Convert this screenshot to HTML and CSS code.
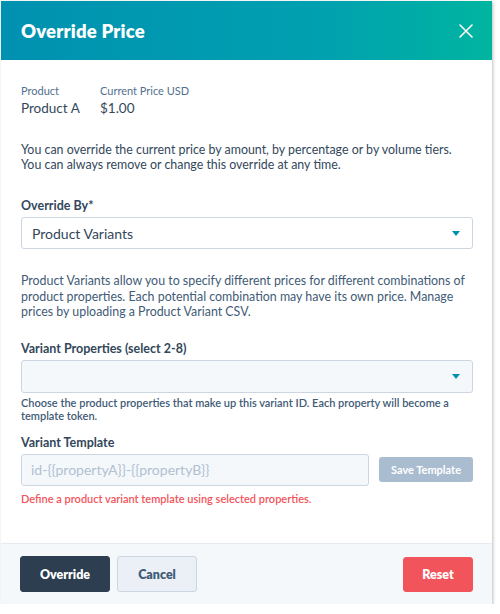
FILE: index.html
```html
<!DOCTYPE html>
<html>
<head>
<meta charset="utf-8">
<link rel="stylesheet" href="styles.css">
</head>
<body>
<div class="modal">
  <header class="modal-header">
    <h1 class="modal-title">Override Price</h1>
    <button class="close-btn" aria-label="Close">
      <svg width="14" height="14" viewBox="0 0 14 14"><path d="M1 1L13 13M13 1L1 13" stroke="#fff" stroke-width="1.6" stroke-linecap="round"/></svg>
    </button>
  </header>
  <main class="modal-body">
    <div class="info-row">
      <div class="info-col">
        <div class="info-label">Product</div>
        <div class="info-value">Product A</div>
      </div>
      <div class="info-col">
        <div class="info-label">Current Price USD</div>
        <div class="info-value">$1.00</div>
      </div>
    </div>
    <p class="intro">You can override the current price by amount, by percentage or by volume tiers. You can always remove or change this override at any time.</p>

    <div class="field field-override">
      <label class="field-label">Override By*</label>
      <div class="select select-filled">
        <span class="select-value">Product Variants</span>
        <span class="caret"></span>
      </div>
    </div>

    <p class="desc">Product Variants allow you to specify different prices for different combinations of product properties. Each potential combination may have its own price. Manage prices by uploading a Product Variant CSV.</p>

    <div class="field field-props">
      <label class="field-label">Variant Properties (select 2-8)</label>
      <div class="select select-empty">
        <span class="select-value"></span>
        <span class="caret"></span>
      </div>
      <p class="help">Choose the product properties that make up this variant ID. Each property will become a template token.</p>
    </div>

    <div class="field field-template">
      <label class="field-label">Variant Template</label>
      <div class="template-row">
        <div class="text-input">id-{{propertyA}}-{{propertyB}}</div>
        <button class="btn-save">Save Template</button>
      </div>
      <p class="error">Define a product variant template using selected properties.</p>
    </div>
  </main>
  <footer class="modal-footer">
    <button class="btn btn-primary">Override</button>
    <button class="btn btn-secondary">Cancel</button>
    <span class="spacer"></span>
    <button class="btn btn-danger">Reset</button>
  </footer>
</div>
</body>
</html>
```

FILE: styles.css
```css
* { box-sizing: border-box; }
html, body { margin: 0; padding: 0; background: #fff; }
body {
  font-family: "Lato", "Liberation Sans", sans-serif;
  color: #33475b;
}
.modal {
  margin: 1px 0 0 1px;
  width: 491px;
  height: 603px;
  display: flex;
  flex-direction: column;
  background: #fff;
  box-shadow: 1px 1px 3px rgba(0,0,0,0.25);
}
.modal-header {
  height: 59px;
  flex: none;
  display: flex;
  align-items: center;
  justify-content: space-between;
  padding: 0 19px 0 20px;
  background: linear-gradient(90deg, #0091b0 0%, #00a0b0 65%, #00b5a0 100%);
}
.modal-title {
  margin: 0;
  font-size: 18.5px;
  font-weight: 800;
  color: #fff;
  letter-spacing: 0.2px;
}
.close-btn {
  border: 0; background: none; padding: 0; margin: 0;
  width: 14px; height: 14px;
  display: flex;
}
.modal-body {
  flex: 1;
  padding: 24px 19px 0 20px;
}
.info-row { display: flex; }
.info-col:first-child { width: 79px; }
.info-label {
  font-size: 11px;
  color: #516f90;
  line-height: 14px;
}
.info-value {
  font-size: 13.5px;
  color: #33475b;
  line-height: 17px;
  margin-top: 2px;
}
.intro {
  margin: 25px 0 0;
  font-size: 12.4px;
  line-height: 15px;
  color: #33475b;
}
.field-label {
  display: block;
  font-size: 12.5px;
  font-weight: 700;
  color: #33475b;
  line-height: 16px;
}
.field-override { margin-top: 26px; }
.select {
  margin-top: 3px;
  height: 32px;
  border: 1px solid #cbd6e2;
  border-radius: 3px;
  background: #f5f8fa;
  display: flex;
  align-items: center;
  justify-content: space-between;
  padding: 0 12px 0 10px;
}
.select-filled { background: #fff; }
.select-value {
  font-size: 14px;
  color: #33475b;
}
.caret {
  width: 0; height: 0;
  border-left: 4.5px solid transparent;
  border-right: 4.5px solid transparent;
  border-top: 5px solid #0091ae;
}
.desc {
  margin: 24px 0 0;
  font-size: 12.4px;
  line-height: 15.5px;
  color: #425b76;
}
.field-props { margin-top: 21px; }
.select-empty { height: 33px; }
.help {
  margin: 3px 0 0;
  font-size: 11px;
  line-height: 13.5px;
  font-weight: 600;
  color: #425b76;
}
.field-template { margin-top: 12px; }
.template-row {
  margin-top: 3px;
  display: flex;
  align-items: center;
  gap: 10px;
}
.text-input {
  width: 348px;
  height: 32px;
  border: 1px solid #cbd6e2;
  border-radius: 3px;
  background: #f5f8fa;
  font-size: 14px;
  color: #b0c1d4;
  display: flex;
  align-items: center;
  padding-left: 9px;
}
.btn-save {
  flex: 1;
  height: 25px;
  border: 0;
  border-radius: 3px;
  background: #a9bcd0;
  color: #fff;
  font-family: inherit;
  font-size: 11px;
  font-weight: 700;
  padding: 0;
}
.error {
  margin: 6px 0 0;
  font-size: 11px;
  font-weight: 600;
  color: #f2545b;
  line-height: 14px;
}
.modal-footer {
  height: 61px;
  flex: none;
  border-top: 1px solid #e5ebf1;
  background: #f5f8fa;
  display: flex;
  align-items: center;
  padding: 0 19px 0 19px;
  gap: 7px;
}
.spacer { flex: 1; }
.btn {
  height: 36px;
  border-radius: 3px;
  font-family: inherit;
  font-size: 12.5px;
  font-weight: 800;
  padding: 0;
}
.btn-primary {
  width: 90px;
  background: #2d3e50;
  border: 1px solid #2d3e50;
  color: #fff;
}
.btn-secondary {
  width: 80px;
  background: #eaf0f6;
  border: 1px solid #cbd6e2;
  color: #425b76;
}
.btn-danger {
  width: 70px;
  height: 35px;
  background: #f2545b;
  border: 1px solid #f2545b;
  color: #fff;
}
```
